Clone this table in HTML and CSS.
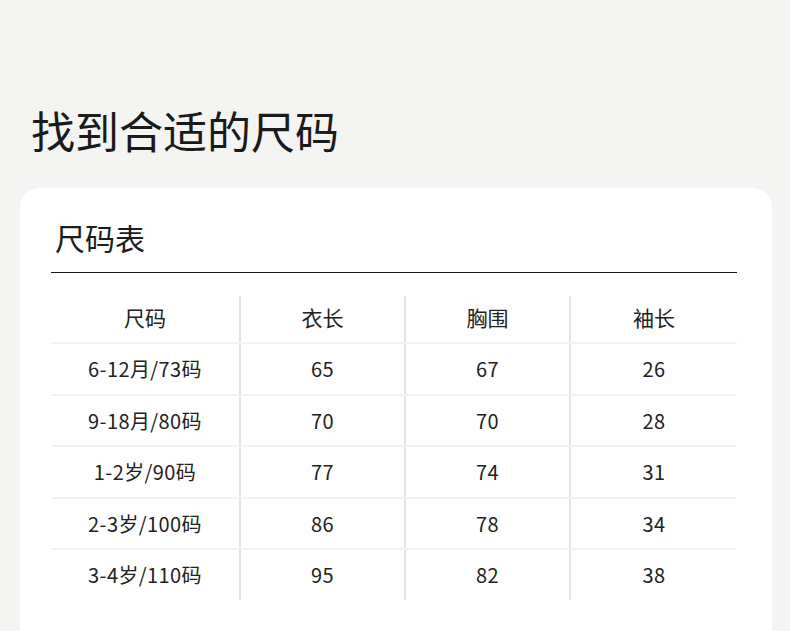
FILE: index.html
```html
<!DOCTYPE html>
<html lang="zh">
<head>
<meta charset="utf-8">
<title>尺码表</title>
<link rel="stylesheet" href="styles.css">
</head>
<body>
<h1 class="page-title">找到合适的尺码</h1>
<section class="card">
  <h2 class="card-title">尺码表</h2>
  <div class="rule"></div>
  <div class="size-table">
    <div class="row head">
      <div class="cell">尺码</div>
      <div class="cell">衣长</div>
      <div class="cell">胸围</div>
      <div class="cell">袖长</div>
    </div>
    <div class="row">
      <div class="cell">6-12月/73码</div>
      <div class="cell">65</div>
      <div class="cell">67</div>
      <div class="cell">26</div>
    </div>
    <div class="row">
      <div class="cell">9-18月/80码</div>
      <div class="cell">70</div>
      <div class="cell">70</div>
      <div class="cell">28</div>
    </div>
    <div class="row">
      <div class="cell">1-2岁/90码</div>
      <div class="cell">77</div>
      <div class="cell">74</div>
      <div class="cell">31</div>
    </div>
    <div class="row">
      <div class="cell">2-3岁/100码</div>
      <div class="cell">86</div>
      <div class="cell">78</div>
      <div class="cell">34</div>
    </div>
    <div class="row">
      <div class="cell">3-4岁/110码</div>
      <div class="cell">95</div>
      <div class="cell">82</div>
      <div class="cell">38</div>
    </div>
  </div>
</section>
</body>
</html>
```
FILE: styles.css
```css
* { box-sizing: border-box; }
html, body {
  margin: 0;
  padding: 0;
  background: #f4f4f3;
  font-family: "Noto Sans CJK SC", "Noto Sans", sans-serif;
  color: #1c1c1c;
  overflow: hidden;
}
body {
  height: 631px;
}
.page-title {
  margin: 100px 0 0 0;
  padding-left: 31px;
  font-size: 44px;
  line-height: 60px;
  font-weight: 400;
  color: #1a1a1a;
}
.card {
  margin: 28px 18px 0 20px;
  background: #ffffff;
  border-radius: 20px 20px 0 0;
  padding: 29px 35px 0 31px;
  height: 443px;
}
.card-title {
  margin: 0;
  padding-left: 4px;
  font-size: 30px;
  line-height: 41px;
  font-weight: 400;
  color: #1c1c1c;
}
.rule {
  margin-top: 14px;
  border-top: 1px solid #1a1a1a;
}
.size-table {
  margin-top: 23px;
  display: flex;
  flex-direction: column;
}
.row {
  display: grid;
  grid-template-columns: 190px 165px 165px 166px;
  height: 51.5px;
  border-top: 2px solid #f2f2f2;
}
.row.head {
  height: 46px;
  border-top: none;
}
.cell {
  display: flex;
  align-items: center;
  justify-content: center;
  font-size: 20px;
  letter-spacing: 0.4px;
  color: #222222;
}
.row.head .cell {
  font-size: 21px;
  letter-spacing: 0;
  padding-bottom: 5px;
}
.cell:not(:last-child) {
  border-right: 2px solid #e4e4e4;
}
```
